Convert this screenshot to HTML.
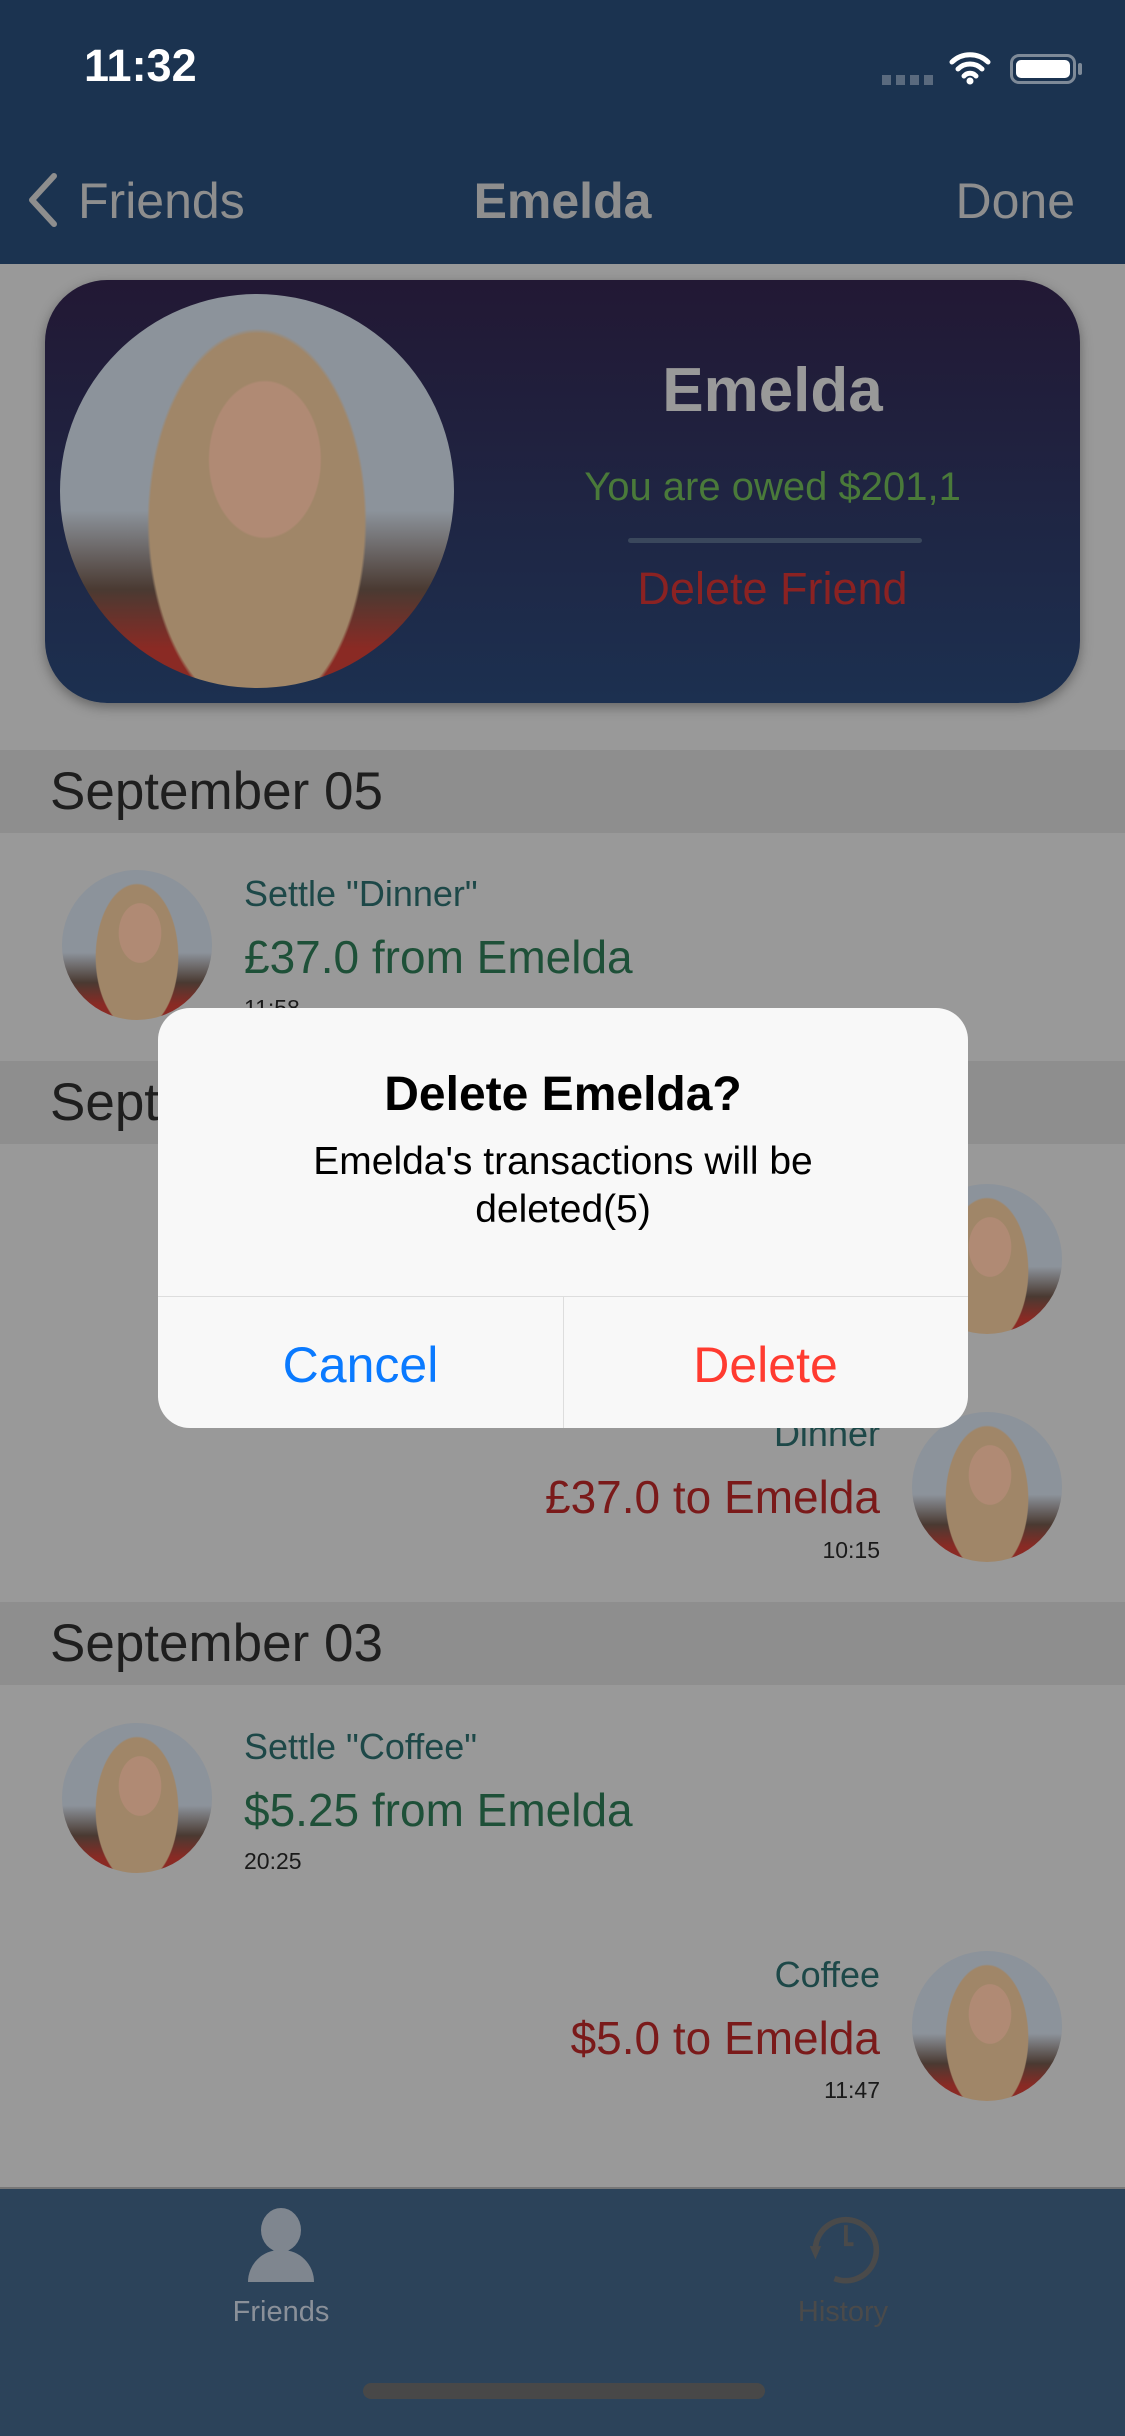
<!DOCTYPE html>
<html><head><meta charset="utf-8"><style>
*{margin:0;padding:0;box-sizing:border-box}
body{width:1125px;height:2436px;position:relative;overflow:hidden;background:#999;font-family:"Liberation Sans",sans-serif}
.a{position:absolute;white-space:nowrap}
.av{position:absolute;border-radius:50%;overflow:hidden;background:
radial-gradient(ellipse 20% 28% at 52% 42%,#b08a74 0,#b08a74 70%,transparent 72%),
radial-gradient(ellipse 34% 60% at 50% 58%,#a08668 0,#a08668 80%,transparent 82%),
linear-gradient(180deg,#8c939b 0,#8c939b 55%,#4a3a32 75%,#8a2a24 90%)}
.hdr{position:absolute;left:0;width:1125px;background:#8e8e8e}
.hdr span{position:absolute;left:50px;top:11px;font-size:53px;color:#1e1e1e}
.t1{font-size:36px;color:#1d4848}
.t2{font-size:46px}
.t3{font-size:23px;color:#1a1a1a}
</style></head><body>
<div class="a" style="left:0;top:0;width:1125px;height:264px;background:#1b3350"></div>
<div class="a" style="left:84px;top:40px;font-size:45px;font-weight:bold;color:#fff">11:32</div>
<div class="a" style="left:882px;top:75px;width:52px;height:10px;background:repeating-linear-gradient(90deg,#5a6a7e 0 9px,transparent 9px 14px)"></div>
<svg class="a" style="left:948px;top:50px" width="44" height="36" viewBox="0 0 44 36"><path d="M4 12a26 26 0 0 1 36 0M10 19a17 17 0 0 1 24 0M16 26a8 8 0 0 1 12 0" stroke="#fff" stroke-width="5" fill="none" stroke-linecap="round"/><circle cx="22" cy="31" r="3.5" fill="#fff"/></svg>
<div class="a" style="left:1010px;top:54px;width:66px;height:30px;border:3px solid #7e8a98;border-radius:9px;padding:3px"><div style="width:100%;height:100%;background:#fff;border-radius:5px"></div></div>
<div class="a" style="left:1078px;top:63px;width:4px;height:12px;background:#7e8a98;border-radius:2px"></div>
<svg class="a" style="left:24px;top:170px" width="40" height="60"><path d="M30 6 L8 30 L30 54" stroke="#8e8e8e" stroke-width="6" fill="none" stroke-linecap="round" stroke-linejoin="round"/></svg>
<div class="a" style="left:78px;top:172px;font-size:50px;color:#8e8e8e">Friends</div>
<div class="a" style="left:0;width:1125px;text-align:center;top:172px;font-size:50px;font-weight:bold;color:#8e8e8e">Emelda</div>
<div class="a" style="right:50px;top:172px;font-size:50px;color:#8e8e8e">Done</div>

<div class="a" style="left:45px;top:280px;width:1035px;height:423px;border-radius:62px;background:linear-gradient(180deg,#221834,#1c3050);box-shadow:0 4px 12px rgba(0,0,0,.35)"></div>
<div class="av" style="left:60px;top:294px;width:394px;height:394px"></div>
<div class="a" style="left:560px;width:425px;text-align:center;top:355px;font-size:62px;font-weight:bold;color:#999">Emelda</div>
<div class="a" style="left:560px;width:425px;text-align:center;top:465px;font-size:40px;color:#4a7a3a">You are owed $201,1</div>
<div class="a" style="left:628px;top:538px;width:294px;height:5px;border-radius:3px;background:#3a475c"></div>
<div class="a" style="left:560px;width:425px;text-align:center;top:563px;font-size:45px;color:#8b2222">Delete Friend</div>

<div class="hdr" style="top:750px;height:83px"><span>September 05</span></div>
<div class="av" style="left:62px;top:870px;width:150px;height:150px"></div>
<div class="a t1" style="left:244px;top:873px">Settle "Dinner"</div>
<div class="a t2" style="left:244px;top:930px;color:#1e5038">£37.0 from Emelda</div>
<div class="a t3" style="left:244px;top:995px">11:58</div>

<div class="hdr" style="top:1061px;height:83px"><span>Sept</span></div>
<div class="av" style="left:912px;top:1184px;width:150px;height:150px"></div>
<div class="av" style="left:912px;top:1412px;width:150px;height:150px"></div>
<div class="a t1" style="right:245px;top:1413px">Dinner</div>
<div class="a t2" style="right:245px;top:1470px;color:#7a1a1a">£37.0 to Emelda</div>
<div class="a t3" style="right:245px;top:1537px">10:15</div>

<div class="hdr" style="top:1602px;height:83px"><span>September 03</span></div>
<div class="av" style="left:62px;top:1723px;width:150px;height:150px"></div>
<div class="a t1" style="left:244px;top:1726px">Settle "Coffee"</div>
<div class="a t2" style="left:244px;top:1783px;color:#1e5038">$5.25 from Emelda</div>
<div class="a t3" style="left:244px;top:1848px">20:25</div>
<div class="av" style="left:912px;top:1951px;width:150px;height:150px"></div>
<div class="a t1" style="right:245px;top:1954px">Coffee</div>
<div class="a t2" style="right:245px;top:2011px;color:#7a1a1a">$5.0 to Emelda</div>
<div class="a t3" style="right:245px;top:2077px">11:47</div>

<div class="a" style="left:0;top:2187px;width:1125px;height:249px;background:#2c435a;border-top:2px solid #777"></div>
<div class="a" style="left:261px;top:2208px;width:40px;height:44px;border-radius:50%;background:#7f868f"></div>
<div class="a" style="left:248px;top:2250px;width:66px;height:32px;border-radius:33px 33px 0 0;background:#7f868f"></div>
<div class="a" style="left:0;width:562px;text-align:center;top:2296px;font-size:29px;color:#8a9099">Friends</div>
<svg class="a" style="left:804px;top:2208px" width="80" height="80" viewBox="0 0 84 84"><path d="M12 42 A32 32 0 1 1 32 74" stroke="#4a4a4a" stroke-width="6" fill="none"/><path d="M44 18 V38 H52" stroke="#4a4a4a" stroke-width="4" fill="none"/><path d="M6 40 L12 54 L18 40Z" fill="#4a4a4a"/></svg>
<div class="a" style="left:562px;width:562px;text-align:center;top:2296px;font-size:29px;color:#4a4a4a">History</div>
<div class="a" style="left:363px;top:2383px;width:402px;height:16px;border-radius:8px;background:#484848"></div>

<div class="a" style="left:158px;top:1008px;width:810px;height:420px;border-radius:32px;background:#f8f8f8"></div>
<div class="a" style="left:158px;width:810px;text-align:center;top:1067px;font-size:48px;font-weight:bold;color:#000">Delete Emelda?</div>
<div class="a" style="left:158px;width:810px;text-align:center;top:1138px;font-size:39px;line-height:48px;color:#000;white-space:normal">Emelda's transactions will be<br>deleted(5)</div>
<div class="a" style="left:158px;top:1296px;width:810px;height:1px;background:#ddd"></div>
<div class="a" style="left:563px;top:1296px;width:1px;height:132px;background:#ddd"></div>
<div class="a" style="left:158px;width:405px;text-align:center;top:1336px;font-size:50px;color:#0a7aff">Cancel</div>
<div class="a" style="left:563px;width:405px;text-align:center;top:1336px;font-size:50px;color:#ff3b30">Delete</div>
</body></html>
